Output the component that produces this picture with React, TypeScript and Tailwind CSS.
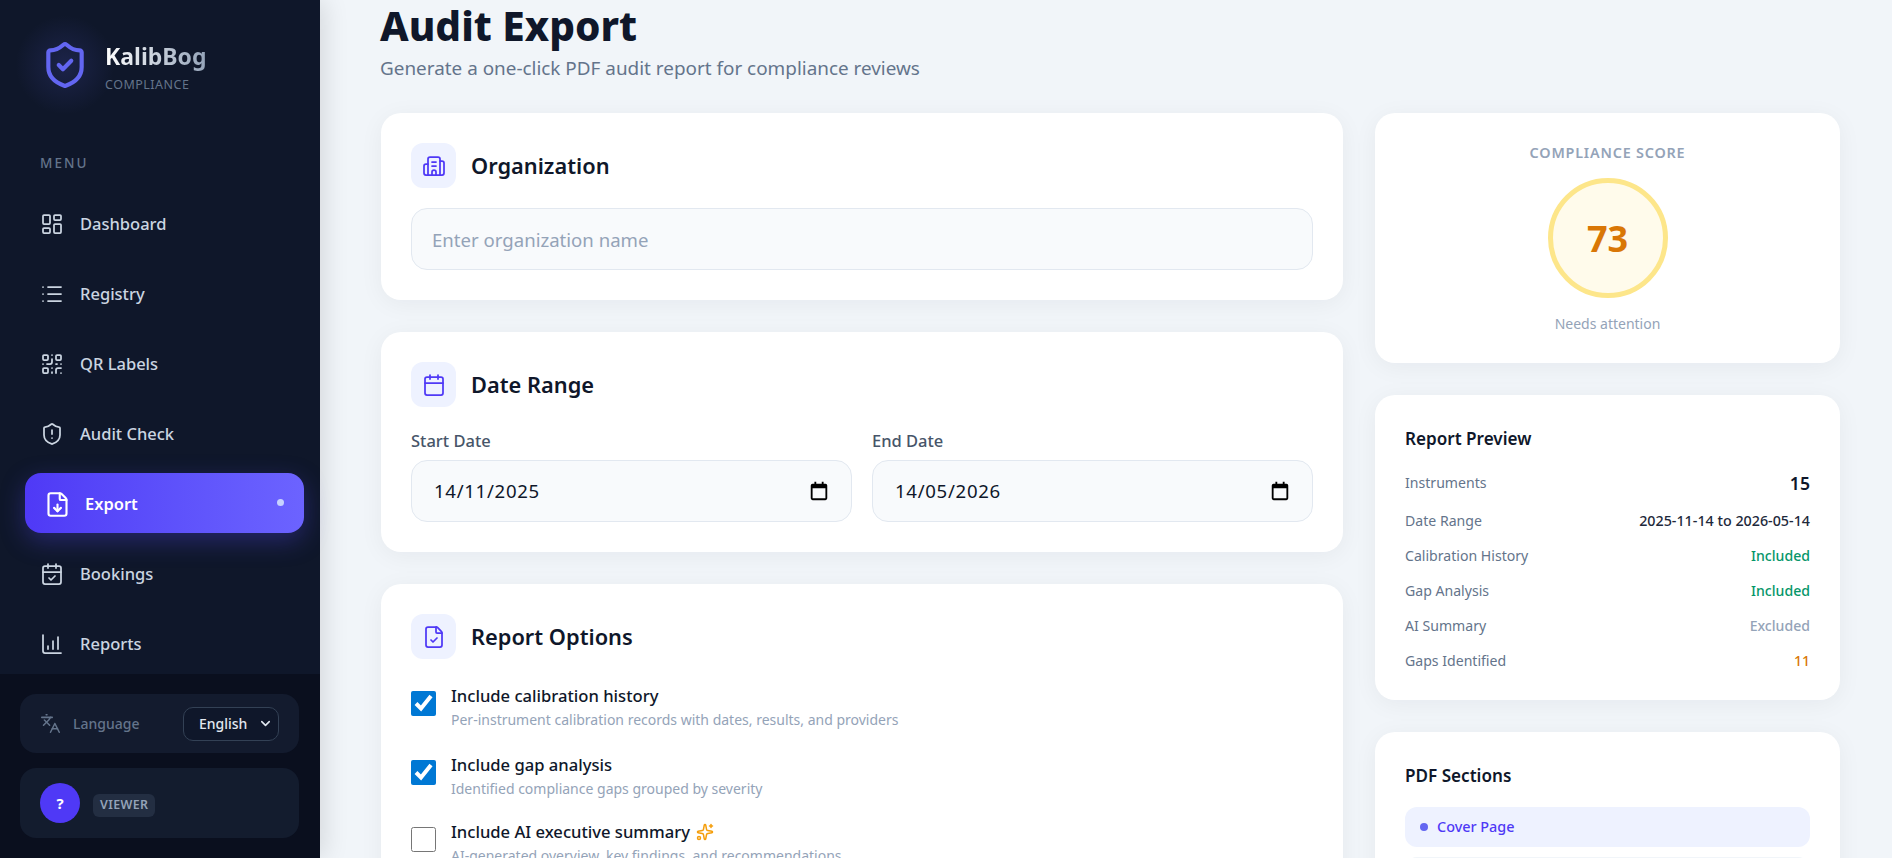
import React from 'react';
import {
  LayoutDashboard,
  List,
  QrCode,
  ShieldAlert,
  FileDown,
  CalendarCheck,
  ChartColumnIncreasing,
  ShieldCheck,
  Languages,
  ChevronDown,
  Building2,
  Calendar,
  FileCheck,
  Sparkles,
} from 'lucide-react';

const navItems = [
  { label: 'Dashboard', icon: LayoutDashboard },
  { label: 'Registry', icon: List },
  { label: 'QR Labels', icon: QrCode },
  { label: 'Audit Check', icon: ShieldAlert },
  { label: 'Export', icon: FileDown, active: true },
  { label: 'Bookings', icon: CalendarCheck },
  { label: 'Reports', icon: ChartColumnIncreasing },
];

const previewRows = [
  { label: 'Calibration History', value: 'Included', color: 'text-[#059669]' },
  { label: 'Gap Analysis', value: 'Included', color: 'text-[#059669]' },
  { label: 'AI Summary', value: 'Excluded', color: 'text-[#94a3b8]' },
  { label: 'Gaps Identified', value: '11', color: 'text-[#d97706]' },
];

const Sidebar: React.FC = () => (
  <aside className="relative z-10 flex h-full w-[320px] shrink-0 flex-col bg-[#0f172a] shadow-[4px_0_24px_rgba(0,0,0,0.12)]">
    <div className="relative flex items-start gap-[15px] pl-[40px] pt-[40px]">
      <div className="absolute left-[15px] top-[15px] h-[100px] w-[100px] rounded-full bg-[radial-gradient(circle,rgba(99,102,241,0.16),transparent_70%)]" />
      <ShieldCheck className="relative h-[50px] w-[50px] text-[#6366f1]" strokeWidth={2} />
      <div className="relative mt-[1px]">
        <div className="bg-gradient-to-r from-white to-[#94a3b8] bg-clip-text text-[23px] font-bold leading-[30px] text-transparent">KalibBog</div>
        <div className="mt-[6px] text-[12.5px] leading-[16px] tracking-[0.5px] text-[#64748b]">COMPLIANCE</div>
      </div>
    </div>

    <div className="mt-[60px] pl-[40px] text-[13.5px] font-medium leading-[20px] tracking-[2px] text-[#64748b]">MENU</div>

    <nav className="mt-[20px] flex flex-1 flex-col gap-[10px] px-[20px]">
      {navItems.map((item) => {
        const Icon = item.icon;
        return (
          <div
            key={item.label}
            className={
              item.active
                ? 'flex h-[60px] w-[279px] shrink-0 translate-x-[5px] items-center gap-[14px] rounded-[16px] bg-gradient-to-r from-[#4f39f6] to-[#6c63ff] pl-[19px] pr-[20px] pt-[2px] text-white shadow-[0_8px_24px_rgba(79,70,229,0.35)]'
                : 'flex h-[60px] shrink-0 items-center gap-[16px] pl-[20px] pt-[2px] text-[#cbd5e1]'
            }
          >
            <Icon className={item.active ? 'h-[27px] w-[27px]' : 'h-[24px] w-[24px]'} strokeWidth={item.active ? 1.9 : 1.75} />
            <span className={item.active ? 'text-[16.5px] font-semibold' : 'text-[16.5px] font-medium'}>{item.label}</span>
            {item.active && <span className="ml-auto h-[7px] w-[7px] -translate-y-[2px] rounded-full bg-[#c7d2fe]" />}
          </div>
        );
      })}
    </nav>

    <div className="flex h-[184px] shrink-0 flex-col gap-[15px] bg-[#0a0f1e] pl-[20px] pr-[21px] pt-[20px]">
      <div className="flex h-[59px] items-center rounded-[16px] bg-[#131b2e] pl-[20px] pr-[20px]">
        <Languages className="h-[21px] w-[21px] text-[#64748b]" strokeWidth={1.75} />
        <span className="ml-[12px] text-[14px] font-medium text-[#64748b]">Language</span>
        <div className="ml-auto flex h-[34px] w-[96px] items-center rounded-[10px] border border-[#334155] bg-[#0f172a] pl-[15px] pr-[5px] text-[14px] font-medium text-[#e2e8f0]">
          <span>English</span>
          <ChevronDown className="ml-auto h-[15px] w-[15px] text-[#e2e8f0]" strokeWidth={2.5} />
        </div>
      </div>
      <div className="flex h-[70px] items-center gap-[13px] rounded-[16px] bg-[#131c2e] pl-[20px]">
        <div className="flex h-[40px] w-[40px] items-center justify-center rounded-full bg-[#4f39f6] text-[15px] font-bold text-white">?</div>
        <span className="mt-[4px] flex h-[23px] items-center rounded-[6px] bg-[#232e42] px-[7px] text-[12.4px] font-semibold tracking-[0.4px] text-[#94a3b8]">VIEWER</span>
      </div>
    </div>
  </aside>
);

const CardHeading: React.FC<{ icon: React.ComponentType<{ className?: string; strokeWidth?: number }>; title: string }> = ({ icon: Icon, title }) => (
  <div className="flex items-center gap-[15px]">
    <div className="flex h-[45px] w-[45px] items-center justify-center rounded-[12px] bg-[#eef2ff]">
      <Icon className="h-[24px] w-[24px] text-[#4f39f6]" strokeWidth={1.75} />
    </div>
    <h2 className="pt-[1px] text-[21.8px] font-semibold text-[#0f172a]">{title}</h2>
  </div>
);

const DateField: React.FC<{ label: string; value: string }> = ({ label, value }) => (
  <div>
    <div className="mb-[7px] pt-[1px] text-[16.5px] font-medium leading-[24px] text-[#475569]">{label}</div>
    <div className="flex h-[62px] items-center justify-between rounded-[16px] border border-[#e2e8f0] bg-[#f8fafc] pl-[22px] pr-[21px] text-[18.6px] tracking-[0.7px] text-[#0f172a]">
      <span>{value}</span>
      <svg viewBox="0 0 24 24" className="h-[22px] w-[22px]" fill="black">
        <path d="M7 2h2v2h6V2h2v2h2a2 2 0 0 1 2 2v14a2 2 0 0 1-2 2H5a2 2 0 0 1-2-2V6a2 2 0 0 1 2-2h2V2zM5 9v11h14V9H5z" />
      </svg>
    </div>
  </div>
);

const OptionRow: React.FC<{ checked: boolean; title: React.ReactNode; sub: string; className?: string }> = ({ checked, title, sub, className }) => (
  <label className={`flex items-start gap-[15px] ${className ?? ''}`}>
    <input type="checkbox" defaultChecked={checked} className="mt-[7px] h-[25px] w-[25px] shrink-0 accent-[#0078d4]" />
    <div>
      <div className="flex items-center gap-[6px] text-[16.6px] font-medium leading-[24px] text-[#0f172a]">{title}</div>
      <div className="text-[14px] leading-[24px] text-[#94a3b8]">{sub}</div>
    </div>
  </label>
);

const App: React.FC = () => (
  <div className="flex h-screen overflow-hidden bg-[#f1f5f9] font-['Noto_Sans',sans-serif]">
    <Sidebar />
    <main className="min-w-0 flex-1 overflow-hidden pl-[60px] pr-[52px]">
      <h1 className="text-[40.5px] font-extrabold leading-[52px] text-[#0f172a]">Audit Export</h1>
      <p className="mt-[4px] text-[18.9px] leading-[24px] text-[#64748b]">Generate a one-click PDF audit report for compliance reviews</p>

      <div className="ml-[1px] mt-[33px] grid grid-cols-[962px_465px] gap-[32px]">
        <div className="flex flex-col gap-[32px]">
          <section className="rounded-[20px] bg-white p-[30px] shadow-[0_4px_24px_rgba(15,23,42,0.05)]">
            <CardHeading icon={Building2} title="Organization" />
            <input
              readOnly
              placeholder="Enter organization name"
              className="mt-[20px] h-[62px] w-full rounded-[16px] border border-[#e2e8f0] bg-[#f8fafc] px-[20px] text-[18.6px] outline-none placeholder:text-[#94a3b8]"
            />
          </section>

          <section className="rounded-[20px] bg-white p-[30px] shadow-[0_4px_24px_rgba(15,23,42,0.05)]">
            <CardHeading icon={Calendar} title="Date Range" />
            <div className="mt-[21px] grid grid-cols-2 gap-[20px]">
              <DateField label="Start Date" value="14/11/2025" />
              <DateField label="End Date" value="14/05/2026" />
            </div>
          </section>

          <section className="rounded-[20px] bg-white p-[30px] shadow-[0_4px_24px_rgba(15,23,42,0.05)]">
            <CardHeading icon={FileCheck} title="Report Options" />
            <div className="mt-[25px]">
              <OptionRow checked title="Include calibration history" sub="Per-instrument calibration records with dates, results, and providers" className="mb-[21px]" />
              <OptionRow checked title="Include gap analysis" sub="Identified compliance gaps grouped by severity" className="mb-[19px]" />
              <OptionRow
                checked={false}
                title={
                  <>
                    Include AI executive summary
                    <Sparkles className="h-[18px] w-[18px] text-[#f59e0b]" strokeWidth={2} />
                  </>
                }
                sub="AI-generated overview, key findings, and recommendations"
              />
            </div>
          </section>
        </div>

        <div className="flex flex-col gap-[32px]">
          <section className="flex flex-col items-center rounded-[20px] bg-white p-[30px] shadow-[0_4px_24px_rgba(15,23,42,0.05)]">
            <div className="text-[14.4px] font-semibold leading-[20px] tracking-[0.8px] text-[#94a3b8]">COMPLIANCE SCORE</div>
            <div className="mt-[15px] flex h-[120px] w-[120px] items-center justify-center rounded-full border-[5px] border-[#fde68a] bg-[#fffbeb] pt-[2px] text-[36px] font-bold text-[#d97706]">73</div>
            <div className="mt-[15px] pt-[1px] text-[14px] leading-[19px] text-[#94a3b8]">Needs attention</div>
          </section>

          <section className="rounded-[20px] bg-white px-[30px] pb-[26px] pt-[30px] shadow-[0_4px_24px_rgba(15,23,42,0.05)]">
            <h3 className="text-[17.1px] font-semibold leading-[28px] text-[#0f172a]">Report Preview</h3>
            <div className="mt-[17px] flex h-[26px] items-center justify-between text-[14.1px] text-[#64748b]">
              <span>Instruments</span>
              <span className="text-[17.6px] font-semibold text-[#0f172a]">15</span>
            </div>
            <div className="mt-[12px] flex h-[26px] items-center justify-between text-[14.1px] text-[#64748b]">
              <span>Date Range</span>
              <span className="text-[14.3px] font-medium text-[#1e293b]">2025-11-14 to 2026-05-14</span>
            </div>
            {previewRows.map((row) => (
              <div key={row.label} className="mt-[9px] flex h-[26px] items-center justify-between text-[14.1px] text-[#64748b]">
                <span>{row.label}</span>
                <span className={`font-medium ${row.color}`}>{row.value}</span>
              </div>
            ))}
          </section>

          <section className="rounded-[20px] bg-white p-[30px] shadow-[0_4px_24px_rgba(15,23,42,0.05)]">
            <h3 className="text-[17.1px] font-semibold leading-[28px] text-[#0f172a]">PDF Sections</h3>
            <div className="mt-[17px] flex h-[40px] items-center gap-[9px] rounded-[12px] bg-[#eef2ff] px-[15px] text-[14.4px] font-medium text-[#4f39f6]">
              <span className="h-[8px] w-[8px] rounded-full bg-[#6366f1]" />
              Cover Page
            </div>
            <div className="mt-[10px] h-[40px] rounded-[12px] border-t border-[#f1f5f9]" />
          </section>
        </div>
      </div>
    </main>
  </div>
);

export default App;
